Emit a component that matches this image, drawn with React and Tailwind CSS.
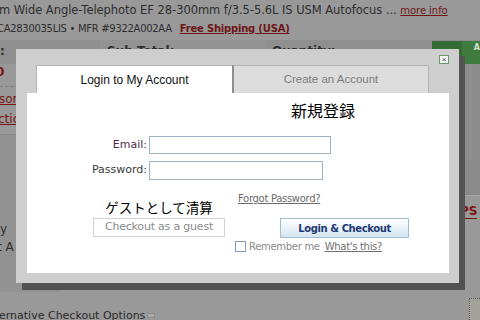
export default function App() {
  return (
    <div className="relative w-[480px] h-[320px] overflow-hidden bg-[#999999] font-['DejaVu_Sans',sans-serif] text-[#2e2e2e]">
      {/* Background page (dimmed) */}
      <div className="h-[20px] text-[11.5px] leading-[20px] tracking-[-0.05px] whitespace-nowrap ml-[-1px]">
        m Wide Angle-Telephoto EF 28-300mm f/3.5-5.6L IS USM Autofocus ...{" "}
        <span className="text-[10px] text-[#6e1616] underline">more info</span>
      </div>
      <div className="h-[18px] leading-[18px] whitespace-nowrap flex ml-[-3px]">
        <span className="text-[10px] tracking-[-0.3px]">CA2830035LIS • MFR #9322A002AA</span>
        <span className="ml-[8px] text-[10px] font-bold text-[#6e1616] underline tracking-[-0.2px]">Free Shipping (USA)</span>
      </div>
      <div className="mt-[2px] h-[24px] flex items-start bg-[#8f8f8f] text-[12px] font-bold leading-[14px]">
        <div className="w-[100px] pt-[4px] pl-[0px]">:</div>
        <div className="w-[166px] pt-[4px] pl-[7px] bg-[#939393] h-full">Sub Total:</div>
        <div className="w-[166px] pt-[4px] pl-[6px] h-full">Quantity:</div>
        <div className="ml-auto mt-[1px] w-[48px] h-[23px] bg-[#3f7a3f] flex">
          <div className="w-[30px] h-full bg-[#356b35]"></div>
          <div className="text-[8px] text-[#cfe0cf] leading-[9px] pt-[2px] pl-[12px]">A</div>
        </div>
      </div>
      <div className="h-[228px] flex">
        <div className="w-[60px] flex flex-col text-[12px] leading-[16px] whitespace-nowrap">
          <div className="h-[22px] ml-[-4px] font-bold text-[#7a1414]">0</div>
          <div className="border-b border-dashed border-[#7c7c7c]"></div>
          <div className="h-[20px] pt-[4px] ml-[-1px] text-[#7a1414] underline">sories</div>
          <div className="h-[20px] pt-[4px] ml-[-2px] text-[#7a1414] underline">ction</div>
          <div className="h-[8px] border-b border-[#8a8a8a]"></div>
          <div className="flex-1 bg-[#929292] flex flex-col">
            <div className="h-[86px]"></div>
            <div className="h-[18px] pl-[0px]">y</div>
            <div className="h-[18px] ml-[-3px]">t A</div>
          </div>
        </div>
        <div className="ml-auto w-[20px] flex flex-col">
          <div className="h-[96px] bg-[#8d8d8d]"></div>
          <div className="h-[36px] bg-[#8a8a8a] border-b border-[#a5a5a5]"></div>
          <div className="pt-[8px] text-[12px] leading-[14px] font-bold text-[#7a1414] whitespace-nowrap">
            <span className="border-b border-[#7a1414]">PS</span>
          </div>
        </div>
      </div>
      <div className="h-[28px] flex">
        <div className="pt-[18px] ml-[-1px] text-[11px] leading-[13px] whitespace-nowrap flex items-center text-[#2a2a2a]">
          <span>ernative Checkout Options</span>
          <span className="ml-[2px] w-[8px] h-[5px] bg-[#a8a8a8] border border-[#8a8a8a]"></span>
        </div>
        <div className="ml-auto mt-[6px] w-[11px] h-[22px] border-l border-t border-dotted border-[#555] bg-[#a3a39b]"></div>
      </div>

      {/* Modal */}
      <div className="absolute left-[16px] top-[49px] w-[443px] h-[234px] bg-[#cecece] shadow-[6px_7px_0_#525252] pt-[16px] pl-[11px] pr-[10px] pb-[10px] flex flex-col">
        <div className="absolute left-[423px] top-[6px] w-[10px] h-[9px] bg-[#f4f4f4] border border-[#6a9a6a] flex items-center justify-center text-[8px] leading-[8px] text-[#444] font-['Liberation_Sans',sans-serif]">
          ×
        </div>
        <div className="flex h-[28px] pl-[9px] font-['Liberation_Sans',sans-serif]">
          <div className="w-[196px] h-[28px] bg-white border-t border-l border-[#b4b4b4] flex items-center justify-center text-[12px] text-[#111]">
            Login to My Account
          </div>
          <div className="w-[197px] h-[28px] bg-[#dcdcdc] border-t border-r border-[#b4b4b4] border-l-2 border-l-[#8e8e8e] flex items-center justify-center text-[11.5px] text-[#7c7c7c]">
            Create an Account
          </div>
        </div>
        <div className="w-[422px] h-[180px] bg-white flex flex-col">
          <div className="pt-[7px] pl-[264px] text-[16px] leading-[20px] text-black font-['Noto_Sans_CJK_JP',sans-serif]">
            新規登録
          </div>
          <div className="mt-[16px] flex items-center h-[18px]">
            <div className="w-[120px] text-right text-[11px] text-[#4a2a4f]">Email:</div>
            <div className="ml-[2px] w-[182px] h-[18px] border border-[#9cb3c4] bg-white"></div>
          </div>
          <div className="mt-[7px] flex items-center h-[18px]">
            <div className="w-[120px] text-right text-[11px] text-[#3a3a3a]">Password:</div>
            <div className="ml-[2px] w-[174px] h-[19px] border border-[#9cb3c4] bg-white"></div>
          </div>
          <div className="flex items-start">
            <div className="ml-[66px] w-[132px] flex flex-col items-center">
              <div className="mt-[20px] text-[13.5px] leading-[16px] text-black font-['Noto_Sans_CJK_JP',sans-serif] whitespace-nowrap">
                ゲストとして清算
              </div>
              <div className="mt-[3px] w-[132px] h-[19px] border border-[#d2d2d2] bg-white flex items-center justify-center text-[11px] tracking-[-0.2px] text-[#8a8a8a] whitespace-nowrap">
                Checkout as a guest
              </div>
            </div>
            <div className="ml-[10px] flex flex-col">
              <div className="mt-[14px] pl-[3px] text-[10px] leading-[12px] tracking-[-0.3px] text-[#6a6a6a] underline whitespace-nowrap">
                Forgot Password?
              </div>
              <div className="mt-[13px] ml-[45px] w-[129px] h-[20px] border border-[#a4bccf] bg-gradient-to-b from-white to-[#d5e5f3] flex items-center justify-center text-[10px] font-bold tracking-[-0.4px] text-[#1e3a74] whitespace-nowrap">
                Login &amp; Checkout
              </div>
              <div className="mt-[2px] flex items-center h-[12px] whitespace-nowrap">
                <div className="w-[11px] h-[11px] border border-[#7f9db9] bg-white"></div>
                <span className="ml-[3px] text-[10px] tracking-[-0.3px] text-[#8a8a8a]">Remember me</span>
                <span className="ml-[5px] text-[10px] tracking-[-0.3px] text-[#707070] underline">What's this?</span>
              </div>
            </div>
          </div>
        </div>
      </div>
    </div>
  );
}
